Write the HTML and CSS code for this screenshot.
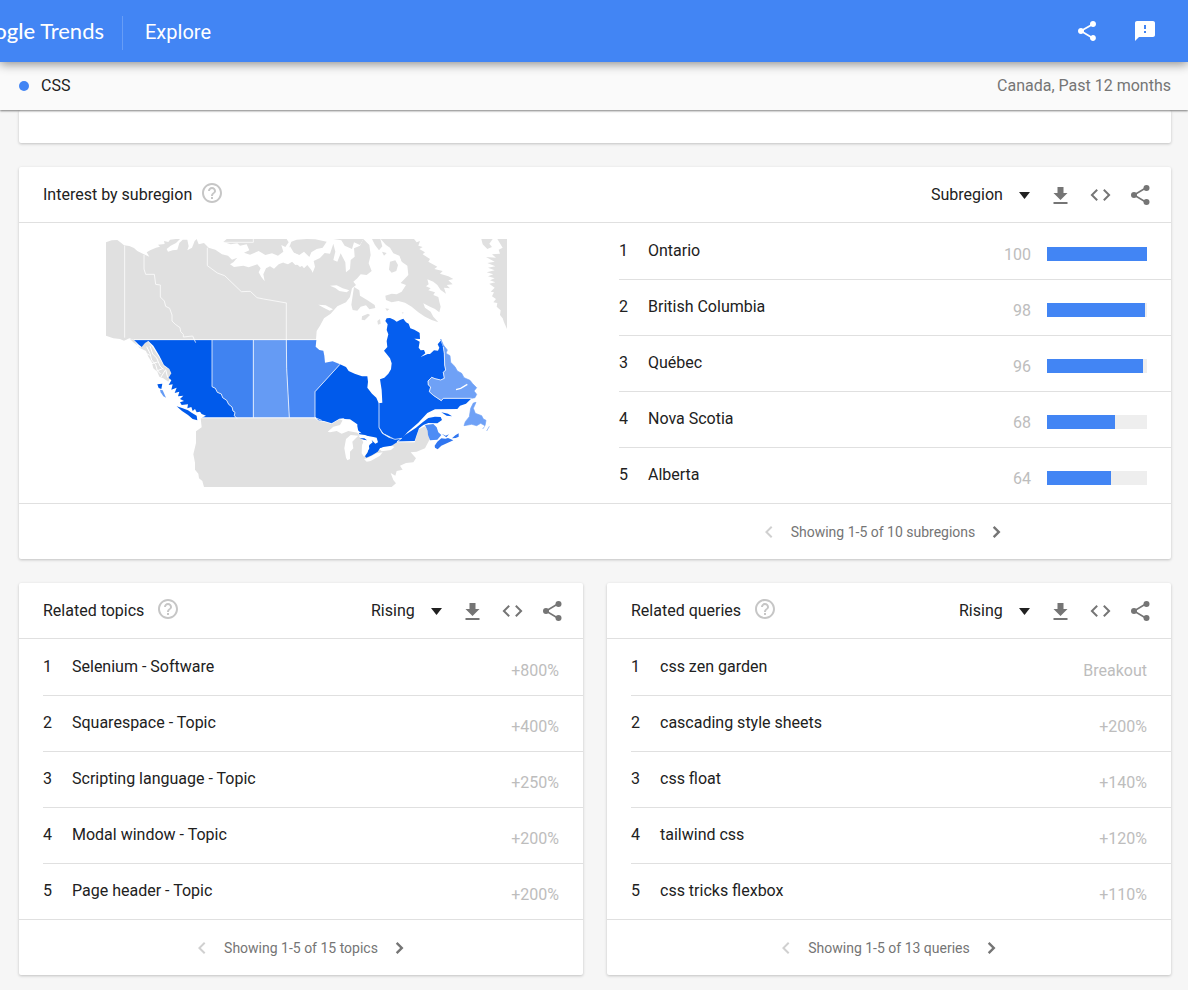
FILE: index.html
```
<!DOCTYPE html>
<html lang="en">
<head>
<meta charset="utf-8">
<meta name="viewport" content="width=device-width, initial-scale=1">
<title>CSS - Explore - Google Trends</title>
<link rel="stylesheet" href="styles.css">
</head>
<body>
<svg class="sprite" aria-hidden="true">
  <symbol id="share" viewBox="0 0 24 24"><path d="M18 16.1c-.8 0-1.4.3-2 .8l-7.100-4.200c0-.2.1-.5.1-.7s0-.5-.1-.7L16 7.200c.5.5 1.200.8 2 .8 1.700 0 3-1.300 3-3s-1.300-3-3-3-3 1.300-3 3c0 .2 0 .5.1.7L8 9.800C7.500 9.300 6.800 9 6 9c-1.700 0-3 1.300-3 3s1.300 3 3 3c.8 0 1.500-.3 2-.8l7.100 4.200c-.1.200-.1.400-.1.600 0 1.600 1.300 3 3 3s2.900-1.400 2.900-3-1.300-2.900-2.900-2.900z"/></symbol>
  <symbol id="share-thin" viewBox="0 0 24 24"><g fill="none" stroke="currentColor" stroke-width="1.600"><path d="M18.500 4.500 6 12l12.500 7.500"/></g><circle cx="18.500" cy="4.900" r="3"/><circle cx="6" cy="12" r="3"/><circle cx="18.500" cy="19.100" r="3"/></symbol>
  <symbol id="feedback" viewBox="0 0 24 24"><path d="M20 2H4c-1.100 0-2 .9-2 2v18l4-4h14c1.100 0 2-.9 2-2V4c0-1.100-.9-2-2-2zm-7 12h-2v-2h2v2zm0-4h-2V6h2v4z"/></symbol>
  <symbol id="help" viewBox="0 0 24 24"><path d="M11 18h2v-2h-2v2zm1-16C6.480 2 2 6.480 2 12s4.480 10 10 10 10-4.480 10-10S17.520 2 12 2zm0 18c-4.410 0-8-3.590-8-8s3.590-8 8-8 8 3.590 8 8-3.590 8-8 8zm0-14c-2.210 0-4 1.790-4 4h2c0-1.100.9-2 2-2s2 .9 2 2c0 2-3 1.750-3 5h2c0-2.250 3-2.500 3-5 0-2.210-1.790-4-4-4z"/></symbol>
  <symbol id="download" viewBox="0 0 24 24"><path d="M19.500 10h-4V4h-6v6h-4l7 7 7-7zM5.500 19v2h14v-2z"/></symbol>
  <symbol id="embed" viewBox="0 0 24 24"><path d="M9.900 16.600 5.300 12l4.600-4.600L8.500 6l-6 6 6 6 1.400-1.400zm5.200 0 4.600-4.600-4.600-4.600L16.500 6l6 6-6 6-1.400-1.400z"/></symbol>
  <symbol id="prev" viewBox="0 0 24 24"><path d="M15.410 7.410 14 6l-6 6 6 6 1.410-1.410L10.830 12z"/></symbol>
  <symbol id="next" viewBox="0 0 24 24"><path d="m7.800 7.700 1.700-1.700 6 6-6 6-1.700-1.700 4.300-4.300z"/></symbol>
</svg>

<header class="topbar">
  <a class="brand" href="#"><span><b>Google</b> Trends</span></a>
  <h1 class="section-name">Explore</h1>
  <button class="topbar-button" type="button" aria-label="Share"><svg class="icon"><use href="#share"/></svg></button>
  <button class="topbar-button" type="button" aria-label="Send feedback"><svg class="icon"><use href="#feedback"/></svg></button>
</header>
<div class="termbar">
  <span class="dot"></span>
  <span class="term">CSS</span>
  <span class="scope">Canada, Past 12 months</span>
</div>

<main class="content">
  <div class="card card-tail"></div>

  <section class="card">
    <header class="card-header">
      <h2>Interest by subregion</h2>
      <button class="help" type="button" aria-label="Help"><svg class="icon"><use href="#help"/></svg></button>
      <div class="picker"><select aria-label="Resolution"><option>Subregion</option></select><svg class="arrow" viewBox="0 0 11 7"><path d="M0 0h11L5.500 7z"/></svg></div>
      <button class="tool" type="button" aria-label="Download"><svg class="icon"><use href="#download"/></svg></button>
      <button class="tool" type="button" aria-label="Embed"><svg class="icon"><use href="#embed"/></svg></button>
      <button class="tool" type="button" aria-label="Share"><svg class="icon"><use href="#share-thin"/></svg></button>
    </header>
    <div class="region-body">
      <svg class="map" viewBox="18 12 1203 744" role="img" aria-label="Map of interest across Canada">
        <!-- Northern mainland, Alaska to Nunavut -->
        <path class="land" d="M18 22 35 16 52 15 64 24 72 31 88 33 102 39 112 48 130 57 148 65 140 52 152 45 168 38 180 35 174 29 194 27 192 18 205 21 210 14 228 12 240 12 228 24 212 32 200 42 204 50 218 46 232 44 238 24 248 14 262 14 266 34 262 46 276 38 284 18 290 12 296 28 312 24 326 38 346 44 366 58 384 62 396 74 412 68 400 82 390 88 402 96 430 92 446 97 472 88 482 100 476 112 484 126 494 139 490 118 498 100 510 94 522 101 536 88 556 80 572 76 586 90 602 88 612 100 622 90 634 105 638 113 645 95 641 78 660 69 674 54 690 56 700 26 706 50 700 75 712 80 722 55 736 82 738 112 750 102 752 75 764 65 762 40 780 32 790 12 808 30 812 60 806 85 815 108 800 120 782 118 772 130 760 140 768 150 756 160 750 186 738 202 712 214 692 236 672 250 660 272 650 288 648 314H102L88 310 72 317 60 312 40 310 18 302Z"/>
        <path class="land" d="M370 21 392 28 412 25 420 32 440 28 448 46 432 53 450 59 476 48 496 60 516 55 534 62 550 50 544 30 556 36 566 22 560 12 380 12Z"/>
        <path class="land" d="M574 20 590 14 620 12 646 13 680 20 668 38 650 42 634 52 628 66 612 50 598 60 578 52 568 36Z"/>
        <path class="water" d="m690 152 20-1 18 9 20 6-8 6-22-4-12-9zM655 209l22 2 22 12-10 4-18-9zM536 66l22-10 12-22 12 20 22 10 14 22-18 10-20-18-16 10-12-4z"/>

        <!-- Arctic islands and Greenland -->
        <path class="land" d="m758 182 4-26 16 10 2 16 20 12 24 16 2 9-18 4-10-12-16 4-10 12-14-2-4-16zM786 244l18-8 6 4-16 16-9-2zM832 258l8-6 2 14-8 3z"/>
        <path class="land" d="M700 12h90l-10 18-18-8-6 20-22-10-10-16zM816 12h25l6 22-10 12-12-16z"/>
        <path class="land" d="M842 12H942L950 22 960 18 955 32 968 36 958 42 975 52 968 58 990 72 985 80 1012 95 1003 102 1028 108 1020 116 1045 124 1060 132 1045 136 1058 148 1040 150 1050 160 1032 158 1038 176 1022 165 1012 150 1000 140 982 133 986 148 978 154 992 160 985 166 1005 172 1000 180 1015 186 1018 200 1022 215 1018 232 1005 222 990 215 970 205 975 218 992 230 1000 245 1015 262 995 255 975 245 955 232 935 215 915 203 895 198 875 202 858 195 856 182 875 176 890 178 905 170 918 150 902 144 925 120 922 92 905 80 898 62 880 55 870 38 858 30Z"/>
        <path class="water" d="m846 96 8-22 14-6 8-6 22 2 8 22-6 22-16 10-16-4-10-10z"/>
        <path class="land" d="m870 80 16-4 8 14-5 18-14 5-8-9zM846 50l14 4-8 8zM856 220l12 2-7 6zM905 232l7 1-4 3z"/>
        <path class="land" d="M1144 12H1178L1168 26 1176 36 1162 42 1148 28ZM1192 12H1221V282L1212 262 1208 250 1200 240 1202 226 1190 215 1192 204 1180 202 1188 192 1176 184 1182 172 1172 170 1184 158 1168 146 1186 142 1170 136 1184 130 1164 124 1180 118 1160 112 1184 106 1164 98 1186 94 1162 84 1184 80 1158 66 1188 68 1176 58 1200 56 1196 44 1208 38Z"/>

        <!-- United States -->
        <path class="land" d="M302 550H645L655 558 672 560 695 567 718 553 750 565 778 600 800 640 840 645 891 622H944L957 582 975 574 985 590 988 615 975 640 950 650 932 652 948 670 940 682 918 684 900 692 908 704 890 708 886 722 872 714 880 735 888 745 875 756H312L307 738 297 730 295 716 285 704V683L280 658 288 624V589L305 577Z"/>

        <!-- Alaska panhandle -->
        <path class="land" d="M102 315 90 312 100 322 122 338 135 322 145 320 160 340 178 368 192 393 212 406 213 425 205 440 190 430 178 425 172 410 160 400 155 380 145 365 138 348 118 338Z"/>
        <path class="coast" d="m140 335 10 20 5 20 12 14 5 18 10 10M150 333l8 24 12 12 10 24 10 10M135 353l14 8M155 386l18-5M170 408l20-8M183 426l14-22 6 24"/>

        <!-- Provinces -->
        <path class="bc" d="M102 315H336V455L346 460 352 472 364 477 368 488 380 496 386 508 396 516 399 528 405 532 403 542 410 548H305L318 542 305 537 300 530 290 532 285 522 278 528 274 516 262 520 264 508 245 510 240 502 252 498 240 492 250 482 234 484 238 470 224 474 230 458 214 464 218 448 206 450 214 436 206 428 214 415 208 402 192 390 178 362 160 332 145 318 135 324 125 336 115 328Z"/>
        <path class="bc" d="M230 514 246 519 264 526 276 534 290 542 292 556 278 552 264 540 246 528ZM172 448l15-2-3 16-8-3z"/>
        <path class="bc-isle" d="m180 464 8 2 10 22-8-4-8-12z"/>
        <path class="ab" d="M336 315H460V548H410L403 542 405 532 399 528 396 516 386 508 380 496 368 488 364 477 352 472 346 460 336 455Z"/>
        <path class="sk" d="M460 315h99l1 85 8 148H460z"/>
        <path class="mb" d="M559 315H649L647 335 658 345 670 347 673 362 675 383 698 379 720 388 645 470V548H568L560 400Z"/>
        <path class="on" d="M720 388 738 396 746 408 764 416 786 424 802 424 804 440 802 458 816 476 829 488 837 507V577L847 595 867 607 905 612 891 622 870 635 841 639 833 650 816 661 799 668 795 664 803 652 808 630 818 622 812 608 795 600 778 598 770 570 752 562 730 550 718 551 695 565 672 558 655 556 645 545V470Z"/>
        <path class="qc" d="M837 577V505L847 503 845 465 840 433 853 428 865 416 873 403 875 385 870 370 852 347 862 336 860 318 865 298 860 285 863 268 856 258 860 250 870 249 882 254 890 260 900 255 910 251 918 262 926 266 931 280 943 284 956 292 959 294 960 312 943 311 959 320 956 338 962 346 972 345 976 355 962 366 983 357 990 357 1002 346 1014 347 1018 338 1013 328 1022 317 1030 336 1033 355 1034 390 1037 405 1030 412 1033 430 1022 435 1005 431 995 427 984 438 985 450 992 456 988 470 1000 481 1024 497 1030 490H1115L1098 506 1080 512 1072 522 1005 523 982 534 955 563 922 592 905 613 885 612 868 604 850 595Z"/>
        <path class="qc" d="M893 621 915 600 948 578 968 562 985 549 1005 545 1022 546 1026 555 1012 565 985 564 970 570 957 580 950 600 944 618Z"/>
        <path class="qc" d="m1024 532 20 4 12 8-16-2z"/>
        <path class="nl" d="M1022 312 1030 330 1042 345 1038 355 1050 362 1052 382 1065 395 1072 408 1085 415 1092 428 1110 436 1118 446 1130 458 1122 468 1130 478 1125 488 1115 490H1030L1024 497 1000 481 988 470 992 456 985 450 984 438 995 427 1005 431 1022 435 1033 430 1030 412 1037 405 1034 390 1033 355 1030 336Z"/>
        <path class="nl" d="M1120 504 1128 502 1120 520 1126 535 1145 542 1150 552 1158 556 1155 572 1142 565 1130 572 1115 568 1092 572 1096 560 1108 545 1112 520ZM1148 582l6-8M1160 588l8-14"/>
        <path class="nb" d="M975 570 1000 567 1010 577 1015 592 1024 600 1012 614 990 616 984 600 983 588Z"/>
        <path class="ns" d="m1004 632 8-12 12-10 12 1 8-2 16 7-18 8-18 8-11 11-8-5zM1056 610l10-9 10-6 0 10-9 4zM1025 596l12 6 10-4-8 9z"/>

        <!-- Lakes, rivers and coastal inlets -->
        <path class="water" d="M683 590 700 575 720 570 730 552 750 553 772 568 772 585 785 595 765 592 745 588 725 596 710 588 690 592Z"/>
        <path class="water" d="M738 668 733 640 738 612 752 600 775 602 765 612 757 620 760 640 750 650 750 672 742 676Z"/>
        <path class="water" d="M775 602 800 602 820 606 830 608 834 622 826 626 815 615 803 618 808 640 800 655 792 665 785 655 786 630 792 618 782 610Z"/>
        <path class="water" d="M792 672 805 668 830 655 848 652 840 662 812 678 800 680ZM838 642 850 636 875 632 883 636 873 645 845 649Z"/>
        <path class="coast-line" d="m1068 464 14-4 20-12"/>
        <path class="island" d="m779 610 14 0 8 6-10-2z"/>

        <!-- Borders -->
        <g class="border">
          <path d="M74 32V308M102 314H648M300 548H645M336 315V455l10 5 6 12 12 5 4 11 12 8 6 12 10 8 3 12 6 4-2 10 8 9M460 315V548M559 204V315l1 85 8 148M132 60v42l5 16h26l4 30 14 2 0 36 12 12 4 16 12 6 7 20 0 18 10 10 14 10 2 12 8 8v8l28-3 9 20M322 38V92l30 22 22 8 50 48 27-1 20 19 20 4 69 12M370 22h90V12"/>
          <path d="m720 388-75 82v78l20 8M837 505v72l10 18 20 12 18 6 20-3-14 10h53"/>
          <path d="M1115 490H1030L1024 497 1000 481 988 470 992 456 985 450 984 438 995 427 1005 431 1022 435 1033 430 1030 412 1037 405 1034 390 1033 355 1030 336"/>
        </g>
      </svg>
      <ol class="rows">
        <li><span class="rank">1</span><span class="name">Ontario</span><span class="value">100</span><span class="bar"><i style="width:100%"></i></span></li>
        <li><span class="rank">2</span><span class="name">British Columbia</span><span class="value">98</span><span class="bar"><i style="width:98%"></i></span></li>
        <li><span class="rank">3</span><span class="name">Québec</span><span class="value">96</span><span class="bar"><i style="width:96%"></i></span></li>
        <li><span class="rank">4</span><span class="name">Nova Scotia</span><span class="value">68</span><span class="bar"><i style="width:68%"></i></span></li>
        <li><span class="rank">5</span><span class="name">Alberta</span><span class="value">64</span><span class="bar"><i style="width:64%"></i></span></li>
      </ol>
    </div>
    <footer class="pager pager-right">
      <button type="button" aria-label="Previous" disabled><svg class="icon"><use href="#prev"/></svg></button>
      <span>Showing 1-5 of 10 subregions</span>
      <button type="button" aria-label="Next"><svg class="icon"><use href="#next"/></svg></button>
    </footer>
  </section>

  <div class="columns">
    <section class="card">
      <header class="card-header">
        <h2>Related topics</h2>
        <button class="help" type="button" aria-label="Help"><svg class="icon"><use href="#help"/></svg></button>
        <div class="picker"><select aria-label="Topic sorting"><option>Rising</option></select><svg class="arrow" viewBox="0 0 11 7"><path d="M0 0h11L5.500 7z"/></svg></div>
        <button class="tool" type="button" aria-label="Download"><svg class="icon"><use href="#download"/></svg></button>
        <button class="tool" type="button" aria-label="Embed"><svg class="icon"><use href="#embed"/></svg></button>
        <button class="tool" type="button" aria-label="Share"><svg class="icon"><use href="#share-thin"/></svg></button>
      </header>
      <ol class="rows rows-inset">
        <li><span class="rank">1</span><span class="name">Selenium - Software</span><span class="value">+800%</span></li>
        <li><span class="rank">2</span><span class="name">Squarespace - Topic</span><span class="value">+400%</span></li>
        <li><span class="rank">3</span><span class="name">Scripting language - Topic</span><span class="value">+250%</span></li>
        <li><span class="rank">4</span><span class="name">Modal window - Topic</span><span class="value">+200%</span></li>
        <li><span class="rank">5</span><span class="name">Page header - Topic</span><span class="value">+200%</span></li>
      </ol>
      <footer class="pager">
        <button type="button" aria-label="Previous" disabled><svg class="icon"><use href="#prev"/></svg></button>
        <span>Showing 1-5 of 15 topics</span>
        <button type="button" aria-label="Next"><svg class="icon"><use href="#next"/></svg></button>
      </footer>
    </section>

    <section class="card">
      <header class="card-header">
        <h2>Related queries</h2>
        <button class="help" type="button" aria-label="Help"><svg class="icon"><use href="#help"/></svg></button>
        <div class="picker"><select aria-label="Query sorting"><option>Rising</option></select><svg class="arrow" viewBox="0 0 11 7"><path d="M0 0h11L5.500 7z"/></svg></div>
        <button class="tool" type="button" aria-label="Download"><svg class="icon"><use href="#download"/></svg></button>
        <button class="tool" type="button" aria-label="Embed"><svg class="icon"><use href="#embed"/></svg></button>
        <button class="tool" type="button" aria-label="Share"><svg class="icon"><use href="#share-thin"/></svg></button>
      </header>
      <ol class="rows rows-inset">
        <li><span class="rank">1</span><span class="name">css zen garden</span><span class="value">Breakout</span></li>
        <li><span class="rank">2</span><span class="name">cascading style sheets</span><span class="value">+200%</span></li>
        <li><span class="rank">3</span><span class="name">css float</span><span class="value">+140%</span></li>
        <li><span class="rank">4</span><span class="name">tailwind css</span><span class="value">+120%</span></li>
        <li><span class="rank">5</span><span class="name">css tricks flexbox</span><span class="value">+110%</span></li>
      </ol>
      <footer class="pager">
        <button type="button" aria-label="Previous" disabled><svg class="icon"><use href="#prev"/></svg></button>
        <span>Showing 1-5 of 13 queries</span>
        <button type="button" aria-label="Next"><svg class="icon"><use href="#next"/></svg></button>
      </footer>
    </section>
  </div>
</main>
</body>
</html>
```

FILE: styles.css
```
* { box-sizing: border-box; }

body {
  margin: 0;
  background: #f6f6f6;
  color: #212121;
  font: 16px/24px Roboto, "Liberation Sans", sans-serif;
}

h1, h2, ol { margin: 0; padding: 0; font-weight: 400; }
ol { list-style: none; }

button {
  display: grid;
  place-items: center;
  padding: 0;
  border: 0;
  background: none;
  color: inherit;
}

.sprite { display: none; }
.icon { display: block; width: 24px; height: 24px; fill: currentColor; }

/* Top bars */
.topbar {
  position: relative;
  z-index: 2;
  display: flex;
  align-items: center;
  height: 62px;
  padding-right: 14px;
  background: #4285f4;
  color: #fff;
  box-shadow: 0 2px 10px rgba(0, 0, 0, .45);
}

.brand {
  display: flex;
  justify-content: flex-end;
  width: 104px;
  overflow: hidden;
  color: inherit;
  font: 22px/32px Lato, sans-serif;
  white-space: nowrap;
  text-decoration: none;
}
.brand b { font-weight: 500; }

.section-name {
  flex: 1;
  margin: 4px 0 0 18px;
  padding: 0 0 2px 22px;
  border-left: 1px solid #679df6;
  font-size: 20px;
  line-height: 32px;
}

.topbar-button { width: 58px; height: 48px; }

.termbar {
  position: relative;
  z-index: 1;
  display: flex;
  align-items: center;
  height: 48px;
  padding: 0 17px 0 19px;
  background: #fafafa;
  box-shadow: 0 1px 2px rgba(0, 0, 0, .5);
}
.dot { width: 10px; height: 10px; border-radius: 50%; background: #4285f4; }
.term { flex: 1; margin-left: 12px; }
.scope { color: #757575; }

/* Cards */
.content { display: grid; gap: 24px; padding: 0 17px 15px 19px; }
.columns { display: grid; grid-template-columns: 1fr 1fr; gap: 24px; }

.card {
  min-width: 0;
  border-radius: 2px;
  background: #fff;
  box-shadow: 0 1px 3px rgba(0, 0, 0, .22);
}
.card-tail { height: 33px; }

.card-header {
  display: flex;
  align-items: center;
  height: 56px;
  padding: 0 11px 0 24px;
  border-bottom: 1px solid #e0e0e0;
}
.card-header h2 { font-size: 16px; line-height: 24px; }

.help { margin: 0 auto 4px 8px; color: #c6c6c6; }
.columns .help { margin-left: 12px; }
.tool { width: 40px; height: 40px; color: #757575; }

.picker { position: relative; margin-right: 10px; }
.picker select {
  appearance: none;
  padding: 0 27px 0 0;
  border: 0;
  background: none;
  color: inherit;
  font: inherit;
}
.arrow {
  position: absolute;
  top: 9px;
  right: 0;
  width: 11px;
  height: 7px;
  fill: #212121;
  pointer-events: none;
}

.region-body { display: grid; grid-template-columns: 575px 1fr; column-gap: 25px; }

.rows li {
  display: flex;
  align-items: center;
  height: 56px;
  padding-right: 24px;
}
.rows li + li { padding-bottom: 1px; border-top: 1px solid #e0e0e0; }
.rows-inset { padding-left: 24px; }
.rank { width: 29px; }
.name { flex: 1; }
.value { padding-top: 8px; color: #bdbdbd; }
.bar { width: 100px; height: 14px; margin: 6px 0 0 16px; background: #eee; }
.bar i { display: block; height: 100%; background: #4285f4; }

.pager {
  display: flex;
  align-items: center;
  justify-content: center;
  gap: 10px;
  height: 56px;
  border-top: 1px solid #e0e0e0;
  color: #757575;
  font-size: 14px;
}
.pager-right { padding: 0 24px 0 600px; }
.pager button:disabled { color: #d0d0d0; }

/* Map */
.map { justify-self: center; width: 401px; height: 248px; margin-top: 16px; }
.land { fill: #e0e0e0; }
.water { fill: #fff; }
.coast { fill: none; stroke: #fff; stroke-width: 3; }
.coast-line { fill: none; stroke: #fff; stroke-width: 4; }
.island { fill: #005aeb; }
.border path { fill: none; stroke: #fff; stroke-width: 3; stroke-opacity: .75; }
.bc { fill: #005aeb; }
.bc-isle { fill: #659bf4; }
.ab { fill: #4083f1; }
.sk { fill: #659bf4; }
.mb { fill: #4888f4; }
.on { fill: #005aeb; }
.qc { fill: #055eef; }
.nl { fill: #6fa1f6; stroke: #6fa1f6; stroke-width: 2; }
.nb { fill: #4d8cf5; }
.ns { fill: #2f75f0; }
```
